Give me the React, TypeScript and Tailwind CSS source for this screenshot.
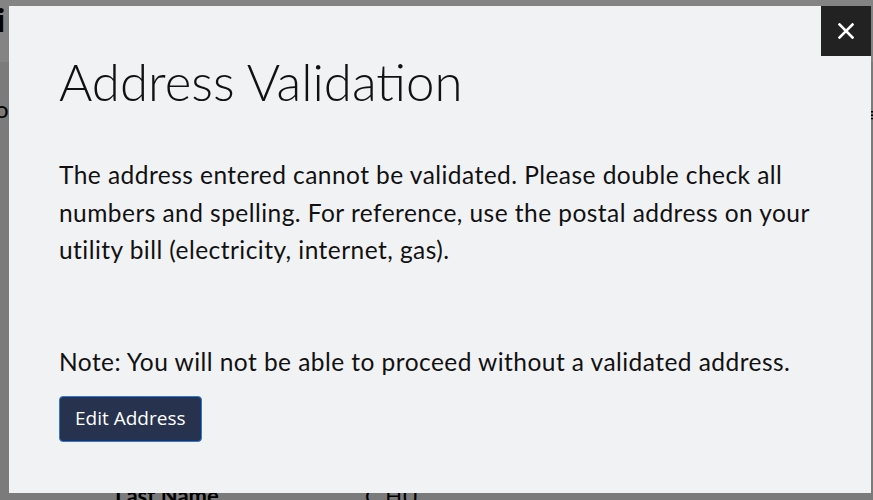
import React from "react";

export default function App() {
  return (
    <div className="relative h-[500px] w-[873px] overflow-hidden bg-[#7b7b7b]" style={{ fontFamily: "Lato, sans-serif" }}>
      {/* page behind the overlay */}
      <div className="absolute inset-x-0 top-0 h-[62px] bg-[#848484]" />
      <div className="absolute left-[-3px] top-[4px] text-[32px] font-bold leading-none text-black">i</div>
      <div className="absolute left-[-5px] top-[97px] text-[24px] leading-none text-black">o</div>
      <div className="absolute left-[866px] top-[22px] h-[14px] w-[4px] bg-[#6b4a2a]" />
      <div className="absolute left-[867px] top-[104px] text-[20px] leading-none text-black">≡</div>
      <div className="absolute left-[115px] top-[485px] text-[22px] font-bold leading-none text-black">Last Name</div>
      <div className="absolute left-[365px] top-[485px] text-[22px] leading-none text-black">C HU</div>

      {/* modal */}
      <div className="relative flex h-full pl-[9px] pt-[6px] pb-[7px] pr-[2px]">
        <div className="relative flex flex-1 flex-col bg-[#f1f2f4] pl-[50px]">
          <button className="absolute right-0 top-0 flex h-[50px] w-[50px] items-center justify-center bg-[#222222]">
            <svg width="16" height="16" viewBox="0 0 16 16">
              <path d="M1.5 1.5 L14.5 14.5 M14.5 1.5 L1.5 14.5" stroke="white" strokeWidth="2.6" strokeLinecap="square" />
            </svg>
          </button>
          <h1 className="mt-[45px] text-[51px] font-light leading-[1.2] text-[#111]">Address Validation</h1>
          <p className="mt-[44px] w-[770px] text-[24.5px] leading-[37.5px] tracking-[0.45px] text-[#111]">
            The address entered cannot be validated. Please double check all numbers and spelling. For reference, use the postal address on your utility bill (electricity, internet, gas).
          </p>
          <p className="mt-[74.5px] text-[24.5px] leading-[37.5px] tracking-[0.45px] text-[#111]">
            Note: You will not be able to proceed without a validated address.
          </p>
          <div className="mt-[15px]">
            <button
              className="h-[46px] rounded-[4px] border border-[#2c7ad6] bg-[#27324f] px-[15px] text-[19px] text-white"
              style={{ fontFamily: "'Open Sans', 'Noto Sans', sans-serif" }}
            >
              Edit Address
            </button>
          </div>
        </div>
      </div>
    </div>
  );
}
